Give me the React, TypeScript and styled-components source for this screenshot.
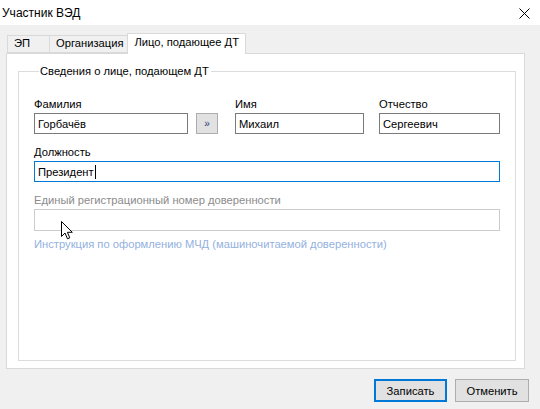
import React, { FC } from 'react'
import styled, { createGlobalStyle } from 'styled-components'

const GlobalStyle = createGlobalStyle`
  html, body {
    margin: 0;
    padding: 0;
    background: #f0f0f0;
  }
  body {
    font-family: "Liberation Sans", "Noto Sans", sans-serif;
    font-size: 11.2px;
    color: #000;
  }
`

const Window = styled.div`
  position: relative;
  width: 540px;
  height: 409px;
  display: flex;
  flex-direction: column;
  background: #f0f0f0;
  overflow: hidden;
`

const TitleBar = styled.div`
  height: 25px;
  flex: none;
  background: #fff;
  display: flex;
  align-items: center;
  justify-content: space-between;
  padding: 0 10px 0 2px;
  font-size: 12px;
`

const CloseIcon = styled.svg`
  display: block;
  width: 11px;
  height: 11px;
  margin-top: 1px;
`

const Body = styled.div`
  flex: 1;
  display: flex;
  flex-direction: column;
  padding: 8px 15px 0 6px;
`

const TabStrip = styled.div`
  display: flex;
  align-items: flex-end;
  padding-left: 1px;
  height: 20px;
  position: relative;
  z-index: 1;
`

const Tab = styled.div`
  height: ${p => (p.$active ? '21px' : '18px')};
  min-width: 43px;
  box-sizing: border-box;
  padding: 0 ${p => (p.$active ? '6px 0 6px' : '4px 0 6px')};
  margin: ${p => (p.$active ? '0 -2px -1px -1px' : '0 0 0 -1px')};
  border: 1px solid #d9d9d9;
  border-bottom: ${p => (p.$active ? 'none' : '1px solid #d9d9d9')};
  background: ${p => (p.$active ? '#fff' : '#f0f0f0')};
  display: flex;
  align-items: center;
  white-space: nowrap;
  line-height: 1;
  padding-bottom: ${p => (p.$active ? '3px' : '0')};
  &:first-child {
    margin-left: 0;
  }
`

const Panel = styled.div`
  height: 316px;
  box-sizing: border-box;
  border: 1px solid #d9d9d9;
  background: #fff;
  padding: 10px 8px 7px 11px;
  display: flex;
`

const Group = styled.fieldset`
  flex: 1;
  margin: 0;
  border: 1px solid #dcdcdc;
  padding: 18px 15px 0 15px;
  min-width: 0;
`

const Legend = styled.legend`
  padding: 0 2px 0 1px;
  margin-left: 5px;
  line-height: 15px;
`

const Row = styled.div`
  display: flex;
  align-items: flex-end;
  margin-bottom: 11px;
`

const Field = styled.div`
  display: flex;
  flex-direction: column;
  width: ${p => p.$width || 'auto'};
  flex: ${p => (p.$width ? 'none' : '1')};
  margin-left: ${p => p.$gap || '0'};
`

const Label = styled.label`
  line-height: 15px;
  height: 15px;
  margin-bottom: 1px;
  color: ${p => (p.$disabled ? '#8b8b8b' : '#000')};
  white-space: nowrap;
`

const TextBox = styled.div`
  box-sizing: border-box;
  height: ${p => (p.$tall ? '22px' : '21px')};
  border: 1px solid ${p => (p.$focused ? '#0078d7' : p.$disabled ? '#cccccc' : '#7a7a7a')};
  background: #fff;
  padding: 0 3px;
  display: flex;
  align-items: center;
  white-space: nowrap;
  overflow: hidden;
`

const Caret = styled.span`
  display: inline-block;
  width: 1px;
  height: 14px;
  background: #000;
  margin-left: 1px;
`

const SmallButton = styled.div`
  box-sizing: border-box;
  width: 22px;
  height: 21px;
  margin-left: 8px;
  border: 1px solid #adadad;
  background: #e1e1e1;
  color: #1f3a78;
  font-size: 10px;
  display: flex;
  align-items: center;
  justify-content: center;
  flex: none;
`

const Link = styled.div`
  margin-top: 6px;
  color: #93b1e0;
  line-height: 15px;
  white-space: nowrap;
`

const Footer = styled.div`
  display: flex;
  justify-content: flex-end;
  gap: 8px;
  padding: 10px 11px 0 0;
  margin-right: -15px;
`

const Button = styled.div`
  box-sizing: border-box;
  height: 23px;
  width: ${p => p.$width};
  background: #e1e1e1;
  border: ${p => (p.$default ? '2px solid #0078d7' : '1px solid #adadad')};
  display: flex;
  align-items: center;
  justify-content: center;
`

const Pointer = styled.svg`
  position: absolute;
  left: 61px;
  top: 221px;
  width: 13px;
  height: 19px;
`

const App: FC = () => {
  return (
    <Window>
      <GlobalStyle />
      <TitleBar>
        <span>Участник ВЭД</span>
        <CloseIcon viewBox="0 0 11 11">
          <path d="M0.5 0.5 L10.5 10.5 M10.5 0.5 L0.5 10.5" stroke="#000" strokeWidth="1" fill="none" />
        </CloseIcon>
      </TitleBar>
      <Body>
        <TabStrip>
          <Tab>ЭП</Tab>
          <Tab>Организация</Tab>
          <Tab $active>Лицо, подающее ДТ</Tab>
        </TabStrip>
        <Panel>
          <Group>
            <Legend>Сведения о лице, подающем ДТ</Legend>
            <Row>
              <Field $width="154px">
                <Label>Фамилия</Label>
                <TextBox>Горбачёв</TextBox>
              </Field>
              <SmallButton>»</SmallButton>
              <Field $width="129px" $gap="17px">
                <Label>Имя</Label>
                <TextBox>Михаил</TextBox>
              </Field>
              <Field $gap="15px">
                <Label>Отчество</Label>
                <TextBox>Сергеевич</TextBox>
              </Field>
            </Row>
            <Row>
              <Field>
                <Label>Должность</Label>
                <TextBox $focused>
                  Президент
                  <Caret />
                </TextBox>
              </Field>
            </Row>
            <Field>
              <Label $disabled>Единый регистрационный номер доверенности</Label>
              <TextBox $disabled $tall />
            </Field>
            <Link>Инструкция по оформлению МЧД (машиночитаемой доверенности)</Link>
          </Group>
        </Panel>
        <Footer>
          <Button $default $width="73px">Записать</Button>
          <Button $width="74px">Отменить</Button>
        </Footer>
      </Body>
      <Pointer viewBox="0 0 13 19">
        <path
          d="M0.5 0.5 L0.5 15.5 L4 12 L6.5 17.8 L8.8 16.8 L6.4 11.3 L11.3 11.3 Z"
          fill="#fff"
          stroke="#000"
          strokeWidth="1"
          strokeLinejoin="miter"
        />
      </Pointer>
    </Window>
  )
}

export default App
